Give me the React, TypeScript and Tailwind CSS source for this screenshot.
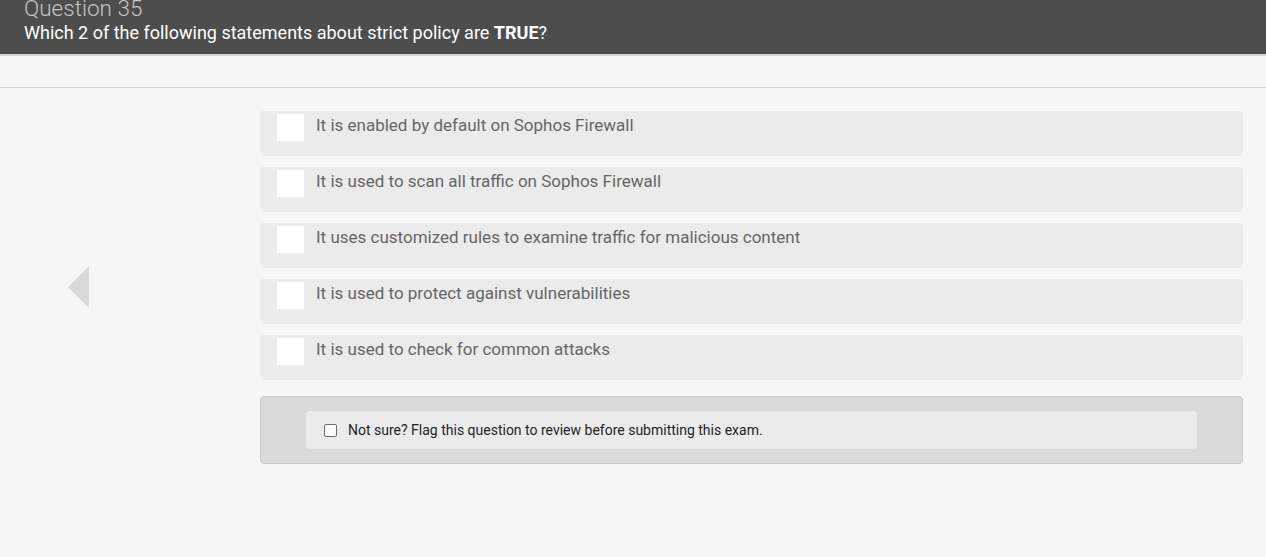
const OPTIONS = [
  "It is enabled by default on Sophos Firewall",
  "It is used to scan all traffic on Sophos Firewall",
  "It uses customized rules to examine traffic for malicious content",
  "It is used to protect against vulnerabilities",
  "It is used to check for common attacks",
];

export default function App() {
  return (
    <div className="min-h-[557px] bg-[#f6f6f6]" style={{ fontFamily: "Roboto, 'Liberation Sans', sans-serif" }}>
      {/* Header */}
      <div className="h-[54px] bg-[#4d4d4d] px-6 overflow-hidden">
        <div className="text-[22.5px] leading-[22px] font-light text-[#c4c4c4] -mt-[3px]">Question 35</div>
        <div className="text-[18px] leading-[22px] text-white mt-[3px]">
          Which 2 of the following statements about strict policy are <b>TRUE</b>?
        </div>
      </div>
      <div className="h-[2px] bg-[#d2d2d2]" />
      <div className="h-[32px] bg-[#f6f6f6] border-b border-[#d4d4d4]" />

      <div className="flex pt-[23px]">
        {/* Left nav arrow */}
        <div className="w-[260px] flex items-start">
          <svg className="ml-[68px] mt-[155px]" width="21" height="42" viewBox="0 0 21 42">
            <polygon points="21,0 21,42 0,21" fill="#d9d9d9" />
          </svg>
        </div>

        <div className="w-[983px] flex flex-col gap-[11px]">
          {OPTIONS.map((o) => (
            <div key={o} className="h-[45px] rounded-[4px] bg-[#ebebeb] flex items-start pt-[3px] pl-[17px]">
              <div className="w-[27px] h-[27px] bg-white shrink-0" />
              <div className="ml-[12px] text-[17px] leading-[22px] text-[#666666]">{o}</div>
            </div>
          ))}

          <div className="mt-[5px] h-[68px] rounded-[4px] bg-[#dadada] border border-[#c9c9c9] px-[45px] pt-[14px]">
            <div className="h-[38px] w-[891px] rounded-[4px] bg-[#ebebeb] flex items-center pl-[18px]">
              <div className="w-[13px] h-[13px] rounded-[2px] border border-[#6b6b6b] bg-white" />
              <span className="ml-[11px] text-[14px] text-[#1f1f1f]">
                Not sure? Flag this question to review before submitting this exam.
              </span>
            </div>
          </div>
        </div>
      </div>
    </div>
  );
}
